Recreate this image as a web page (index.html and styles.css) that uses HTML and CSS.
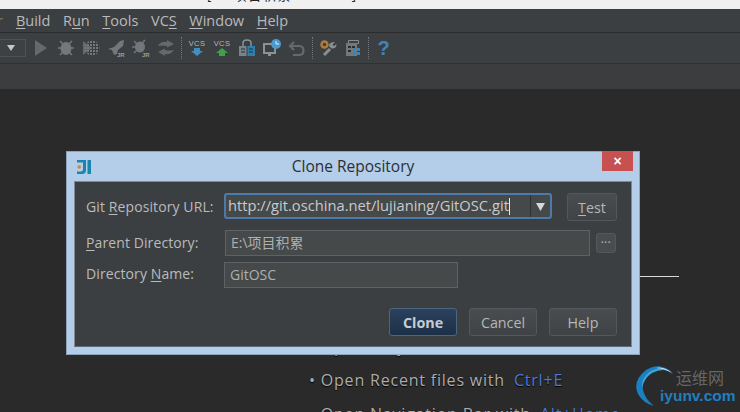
FILE: index.html
```html
<!DOCTYPE html>
<html lang="en">
<head>
<meta charset="utf-8">
<title>Clone Repository</title>
<link rel="stylesheet" href="styles.css">
</head>
<body>
<div class="ide">
  <div class="titlebar"><span class="title-text">[E:\项目积累\GitOSC]</span></div>
  <nav class="menubar">
    <span class="menu menu-cut">r</span>
    <span class="menu"><u>B</u>uild</span>
    <span class="menu">R<u>u</u>n</span>
    <span class="menu"><u>T</u>ools</span>
    <span class="menu">VC<u>S</u></span>
    <span class="menu"><u>W</u>indow</span>
    <span class="menu"><u>H</u>elp</span>
  </nav>
  <div class="toolbar">
    <div class="runconfig"><svg width="10" height="6" viewBox="0 0 10 6"><path d="M1 0h8L5 6z" fill="#c4c6c8"/></svg></div>
    <span class="tool"><svg width="20" height="20" viewBox="0 0 20 20"><path d="M4 2l12 8-12 8z" fill="#66696b"/></svg></span>
    <span class="tool"><svg width="20" height="20" viewBox="0 0 20 20"><ellipse cx="10" cy="10.500" rx="5.500" ry="6.500" fill="#75787a"/><path d="M4 3l3 3M16 3l-3 3M2 10h4M18 10h-4M4 17l3-3M16 17l-3-3" stroke="#75787a" stroke-width="1.500"/></svg></span>
    <span class="tool"><svg width="20" height="20" viewBox="0 0 20 20"><defs><pattern id="dots" width="3" height="3" patternUnits="userSpaceOnUse"><rect width="2" height="2" fill="#73767a"/></pattern></defs><path d="M2 3l9 7-9 7z" fill="#66696b"/><circle cx="11" cy="10" r="7.500" fill="url(#dots)"/></svg></span>
    <span class="tool"><svg width="20" height="20" viewBox="0 0 20 20"><path d="M2 11l6-2 6-6 4-1-1 6-5 4-1 4-3 1-2-5z" fill="#73767a"/><text x="11" y="19" class="tiny">JR</text></svg></span>
    <span class="tool"><svg width="20" height="20" viewBox="0 0 20 20"><ellipse cx="9" cy="9" rx="5" ry="5.500" fill="#73767a"/><path d="M3 3l3 3M14 2l-3 3M1 9h4M3 15l3-3" stroke="#73767a" stroke-width="1.500"/><text x="11" y="19" class="tiny">JR</text></svg></span>
    <span class="tool"><svg width="20" height="20" viewBox="0 0 20 20"><path d="M2 8q3-5 9-4V2l7 4-7 3.500V8Q6 7 2 8zM18 12q-3 5-9 4v2l-7-4 7-3.500V12q5 1 9 0z" fill="#66696b"/></svg></span>
    <span class="sep"></span>
    <span class="tool"><svg width="20" height="20" viewBox="0 0 20 20"><text x="10" y="7.500" class="vcs">VCS</text><path d="M7 10h6v3h3l-6 5-6-5h3z" fill="#3f8fc4"/></svg></span>
    <span class="tool"><svg width="20" height="20" viewBox="0 0 20 20"><text x="10" y="7.500" class="vcs">VCS</text><path d="M10 10l6 5h-3v3H7v-3H4z" fill="#3ea04c"/></svg></span>
    <span class="tool"><svg width="20" height="20" viewBox="0 0 20 20"><path d="M6 8V5q0-3 4-3t4 3v3" fill="none" stroke="#8a9398" stroke-width="1.500"/><path d="M2 8h7.500v10H2z" fill="#76848c"/><path d="M10.500 8H18v10h-7.500z" fill="#2f7fae"/><path d="M4 11h4M4 14h4M12 11h4M12 14h4" stroke="#2b2d2f"/></svg></span>
    <span class="tool"><svg width="20" height="20" viewBox="0 0 20 20"><path d="M2 6h11v9H2z" fill="none" stroke="#8f9294" stroke-width="2"/><path d="M6 16h3v2H6z" fill="#8f9294"/><circle cx="14" cy="6" r="5" fill="#4a9ad0"/><path d="M14 3v3h3" fill="none" stroke="#e6eef2"/></svg></span>
    <span class="tool"><svg width="20" height="20" viewBox="0 0 20 20"><path d="M7 4L3 8l4 4" fill="none" stroke="#66696b" stroke-width="2.200"/><path d="M4 8h8q4.500 0 4.500 4.500T12 17H6" fill="none" stroke="#66696b" stroke-width="2.200"/></svg></span>
    <span class="sep"></span>
    <span class="tool"><svg width="20" height="20" viewBox="0 0 20 20"><circle cx="6.500" cy="6.500" r="3" fill="none" stroke="#b07c3c" stroke-width="2.500"/><path d="M6 17l6-6" stroke="#8b8e90" stroke-width="3"/><path d="M11 8q0-4 6-4l-2.500 2.500 1.500 1.500 2.500-2q0 5-5 4.500z" fill="#8b8e90"/></svg></span>
    <span class="tool"><svg width="20" height="20" viewBox="0 0 20 20"><path d="M5.500 2.500h10v3h-10z" fill="none" stroke="#8a8d8f"/><path d="M3 5h11v13H3z" fill="#74787a"/><path d="M5 8h3v2H5zM9 8h3v2H9zM5 12h3v2H5z" fill="#2b2d2f"/><path d="M10 10h3v3h-3zM14 10h3v3h-3zM10 14h3v3h-3zM14 14h3v3h-3z" fill="#3a84b8"/></svg></span>
    <span class="sep"></span>
    <span class="tool help">?</span>
  </div>
  <div class="navbar"></div>
  <main class="editor">
    <div class="rule"></div>
    <p class="hint">• Open Project View with <span class="key">Alt+1</span></p>
    <p class="hint">• Open Recent files with <span class="key">Ctrl+E</span></p>
    <p class="hint">• Open Navigation Bar with <span class="key">Alt+Home</span></p>
  </main>

  <section class="dialog">
    <header class="dialog-head">
      <svg class="dialog-logo" width="16" height="16" viewBox="0 0 16 16"><path d="M1 1h9v10q0 4-4 4H1v-2.500h4q2 0 2-2V3.500H1z" fill="#1a86ae"/><path d="M11.500 1H15v14h-3.500z" fill="#1a86ae"/><circle cx="3.200" cy="8" r="1.800" fill="#d08a2c"/></svg>
      <h1 class="dialog-title">Clone Repository</h1>
      <button class="close" type="button">×</button>
    </header>
    <div class="dialog-body">
      <div class="row row-url">
        <label class="label">Git <u>R</u>epository URL:</label>
        <div class="combo">
          <span class="combo-text">http://git.oschina.net/lujianing/GitOSC.git<i class="caret"></i></span>
          <span class="combo-arrow"><svg width="9" height="9" viewBox="0 0 9 9"><path d="M0 1h9L4.500 9z" fill="#d5d7d8"/></svg></span>
        </div>
        <button class="btn btn-test" type="button"><u>T</u>est</button>
      </div>
      <div class="row row-parent">
        <label class="label"><u>P</u>arent Directory:</label>
        <div class="field field-parent">E:\项目积累</div>
        <button class="browse" type="button">···</button>
      </div>
      <div class="row row-name">
        <label class="label">Directory <u>N</u>ame:</label>
        <div class="field field-name">GitOSC</div>
      </div>
      <footer class="actions">
        <button class="btn btn-primary" type="button">Clone</button>
        <button class="btn" type="button">Cancel</button>
        <button class="btn" type="button">Help</button>
      </footer>
    </div>
  </section>

  <div class="watermark">
    <svg class="wm-logo" width="40" height="46" viewBox="0 0 40 46"><path d="M37 9Q24-3 10 6-4 17 2 30q5 9 16 12Q9 35 7 26 5 14 15 8q11-5 22 1z" fill="#1b80c0"/><path d="M35 7Q22 1 12 9 5 15 6 24 8 14 16 9q9-5 19-2z" fill="#3aa6e0"/><path d="M37 10Q28 2 20 4q9 0 17 6z" fill="#d4e8f4"/></svg>
    <span class="wm-cn">运维网</span>
    <span class="wm-en">iyunv.com</span>
  </div>
</div>
</body>
</html>
```
FILE: styles.css
```css
* { box-sizing: border-box; }
html, body { margin: 0; padding: 0; }
body { width: 740px; height: 412px; overflow: hidden; background: #2a2a2a; font-family: "Open Sans", "Noto Sans CJK SC", sans-serif; }
.ide { position: relative; width: 740px; height: 412px; overflow: hidden; display: flex; flex-direction: column; }

.titlebar { height: 9px; flex: none; background: #f0f0f0; overflow: hidden; color: #222; font-size: 13px; line-height: 14px; white-space: nowrap; padding-left: 207px; }
.title-text { display: block; margin-top: -12px; letter-spacing: 1.700px; }

.menubar { height: 24px; flex: none; display: flex; background: #3c3f41; color: #b8babb; font-size: 14.500px; line-height: 24px; border-bottom: 1px solid #2b2b2b; }
.menu { margin-right: 12.600px; white-space: nowrap; }
.menu u { text-underline-offset: 2px; text-decoration-thickness: 1px; }
.menu-cut { margin-left: -3px; margin-right: 13px; color: #8a7a5c; }

.toolbar { height: 31px; flex: none; display: flex; align-items: center; background: #3c3f41; border-bottom: 1px solid #2f3133; }
.runconfig { width: 26px; height: 18px; flex: none; margin-right: 2px; display: flex; align-items: center; padding-left: 6px; border: 1px solid #4e5254; border-left: 0; background: #3e4143; }
.tool { width: 25px; height: 22px; flex: none; display: flex; align-items: center; justify-content: center; }
.tiny { font: bold 6px "Liberation Sans", sans-serif; fill: #9a9d9f; }
.vcs { font: 7.500px "Liberation Sans", sans-serif; fill: #b4b6b7; text-anchor: middle; letter-spacing: .4px; }
.help { color: #3f86b8; font: bold 20px "Liberation Sans", sans-serif; }
.sep { width: 1px; height: 22px; flex: none; margin: 0 2px 0 3px; border-left: 1px dotted #74777a; }

.navbar { height: 25px; flex: none; background: #3b3d3f; }

.editor { flex: 1; min-height: 0; background: #2a2a2a; padding-top: 187px; color: #adadad; }
.rule { height: 1px; width: 320px; margin-left: 359px; background: #d8d8d8; }
.hint { margin: 52px 0 0 309px; height: 34px; line-height: 34px; font-size: 16px; letter-spacing: .8px; white-space: nowrap; text-shadow: 0 1px 1px #000; }
.hint + .hint { margin-top: 0; }
.key { color: #4d78d8; margin-left: 4px; }

.dialog { position: absolute; left: 66px; top: 151px; width: 574px; height: 204px; background: #b4cde8; border: 1px solid #8ea4bc; display: flex; flex-direction: column; padding: 0 7px 7px; }
.dialog-head { height: 29px; flex: none; display: flex; align-items: center; position: relative; }
.dialog-logo { margin: 0 -18px 0 2px; flex: none; }
.dialog-title { flex: 1; margin: 0; font-size: 15.500px; font-weight: 400; color: #2a2f36; text-align: center; line-height: 28px; padding-bottom: 1px; }
.close { position: absolute; top: -1px; right: -1px; width: 31px; height: 20px; padding: 0; border: 0; background: #c75050; color: #fff; font: bold 14px/19px "Liberation Sans", sans-serif; }

.dialog-body { flex: 1; min-height: 0; background: #3c3f41; border: 1px solid #7d8a96; border-bottom-color: #5f6a74; padding: 11px 14px 0 11px; color: #b9bbbc; font-size: 14px; }
.row { display: flex; align-items: center; }
.row-url { height: 28px; }
.row-parent { height: 26px; margin-top: 9px; }
.row-name { height: 26px; margin-top: 6px; }
.label { width: 138px; flex: none; white-space: nowrap; letter-spacing: .1px; padding-bottom: 2px; }
.row-name .label { padding-bottom: 4px; }
.label u { text-underline-offset: 2px; text-decoration-thickness: 1px; }

.combo { width: 328px; height: 26px; flex: none; display: flex; align-self: flex-start; background: #45494a; border: 2px solid #4d7aa8; border-radius: 3px; }
.combo-text { flex: 1; padding-left: 2px; line-height: 21px; font-size: 14.700px; color: #c8cacb; white-space: nowrap; }
.caret { display: inline-block; width: 1px; height: 17px; background: #e8e8e8; vertical-align: -4px; }
.combo-arrow { width: 20px; flex: none; display: flex; align-items: center; justify-content: center; border-left: 1px solid #2e3032; }

.btn { width: 68px; height: 28px; padding: 0; border: 1px solid #54585a; border-radius: 3px; background: linear-gradient(#4a4d4f, #404345); color: #b4b6b7; font: 14.300px "Open Sans", sans-serif; }
.btn u { text-underline-offset: 2px; text-decoration-thickness: 1px; }
.btn-test { width: 50px; margin-left: 15px; }
.btn-primary { background: linear-gradient(#2b415d, #1c3048); border-color: #4a6680; color: #c9ccce; font-weight: 700; }

.field { height: 26px; flex: none; background: #45494a; border: 1px solid #5e6264; line-height: 24px; padding-left: 5px; color: #adafb0; }
.field-parent { width: 365px; margin-left: 1px; }
.field-name { width: 234px; line-height: 23px; }
.browse { width: 20px; height: 20px; margin-left: 6px; padding: 0; background: #4a4d4f; border: 1px solid #54585a; border-radius: 3px; color: #a8aaab; font: 700 10px/16px "Liberation Sans", sans-serif; }

.actions { display: flex; gap: 12px; justify-content: flex-end; margin-top: 20px; }

.watermark { position: absolute; left: 636px; top: 364px; width: 104px; height: 48px; }
.wm-logo { position: absolute; left: 0; top: 0; }
.wm-cn { position: absolute; left: 40px; top: 3px; font: 16px/20px "Noto Sans CJK SC", sans-serif; color: #666; }
.wm-en { position: absolute; left: 24px; top: 22px; font: bold 15.500px/20px "Liberation Sans", sans-serif; color: #1f7fc0; white-space: nowrap; }
```
